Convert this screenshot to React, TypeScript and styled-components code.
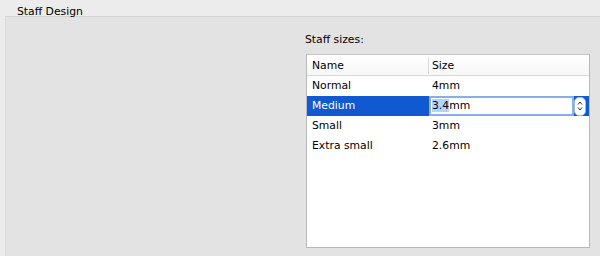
import styled, { createGlobalStyle } from "styled-components";

const GlobalStyle = createGlobalStyle`
  html, body {
    margin: 0;
    padding: 0;
    background: #ececec;
    overflow: hidden;
  }
  body {
    font-family: "DejaVu Sans", Verdana, sans-serif;
    font-size: 10.8px;
    color: #000;
  }
`;

type Row = { name: string; size: string; editing?: boolean };

const rows: Row[] = [
  { name: "Normal", size: "4mm" },
  { name: "Medium", size: "3.4mm", editing: true },
  { name: "Small", size: "3mm" },
  { name: "Extra small", size: "2.6mm" },
];

const Page = styled.div`
  width: 600px;
  height: 256px;
  overflow: hidden;
  padding-left: 5px;
  box-sizing: border-box;
`;

const GroupTitle = styled.div`
  padding: 5px 0 0 12px;
  height: 11px;
  line-height: 13px;
`;

const GroupBox = styled.div`
  margin-right: -20px;
  height: 260px;
  background: #e3e3e3;
  border-top: 1px solid #d3d3d3;
  border-left: 1px solid #d9d9d9;
  padding-left: 299px;
  display: flex;
  flex-direction: column;
`;

const Label = styled.div`
  margin-top: 16px;
  line-height: 13px;
`;

const Table = styled.div`
  margin: 8px 0 0 1px;
  width: 284px;
  height: 194px;
  box-sizing: border-box;
  background: #fff;
  border: 1px solid #b9b9b9;
  border-top-color: #c6c6c6;
  display: flex;
  flex-direction: column;
`;

const HeaderRow = styled.div`
  display: grid;
  grid-template-columns: 121px 1fr;
  height: 20px;
  border-bottom: 1px solid #d6d6d6;
  background: linear-gradient(#ffffff, #f7f7f7);
`;

const HeaderCell = styled.div<{ $divider?: boolean }>`
  line-height: 21px;
  padding-left: ${(p) => (p.$divider ? "4px" : "5px")};
  position: relative;
  ${(p) =>
    p.$divider &&
    `&::before {
      content: "";
      position: absolute;
      left: 0;
      top: 2px;
      bottom: 2px;
      width: 1px;
      background: #d9d9d9;
    }`}
`;

const BodyRow = styled.div<{ $selected?: boolean }>`
  display: grid;
  grid-template-columns: 122px 1fr;
  height: 20px;
  line-height: 20px;
  background: ${(p) => (p.$selected ? "#1159d1" : "transparent")};
  color: ${(p) => (p.$selected ? "#fff" : "#000")};
`;

const NameCell = styled.div`
  padding-left: 5px;
`;

const SizeCell = styled.div`
  padding-left: 3px;
`;

const EditCell = styled.div`
  display: flex;
  align-items: center;
  gap: 2px;
  padding-right: 3px;
`;

const EditField = styled.div`
  flex: 1;
  height: 16px;
  margin-left: 2px;
  background: #fff;
  color: #000;
  line-height: 16px;
  box-shadow: 0 0 0 2px #86aee9;
  padding-left: 1px;
`;

const SelectedText = styled.span`
  background: #b3d4fd;
`;

const Stepper = styled.div`
  width: 10px;
  height: 17px;
  background: #fff;
  border: 1px solid #9fb8dc;
  border-radius: 5px;
  display: flex;
  align-items: center;
  justify-content: center;
`;

const Arrows = () => (
  <svg width="6" height="12" viewBox="0 0 6 12">
    <path d="M1 4.5 L3 2 L5 4.5" fill="none" stroke="#333" strokeWidth="1" />
    <path d="M1 7.5 L3 10 L5 7.5" fill="none" stroke="#333" strokeWidth="1" />
  </svg>
);

export default function App() {
  return (
    <>
      <GlobalStyle />
      <Page>
        <GroupTitle>Staff Design</GroupTitle>
        <GroupBox>
          <Label>Staff sizes:</Label>
          <Table>
            <HeaderRow>
              <HeaderCell>Name</HeaderCell>
              <HeaderCell $divider>Size</HeaderCell>
            </HeaderRow>
            {rows.map((row) => (
              <BodyRow key={row.name} $selected={row.editing}>
                <NameCell>{row.name}</NameCell>
                {row.editing ? (
                  <EditCell>
                    <EditField>
                      <SelectedText>3.4</SelectedText>mm
                    </EditField>
                    <Stepper>
                      <Arrows />
                    </Stepper>
                  </EditCell>
                ) : (
                  <SizeCell>{row.size}</SizeCell>
                )}
              </BodyRow>
            ))}
          </Table>
        </GroupBox>
      </Page>
    </>
  );
}
